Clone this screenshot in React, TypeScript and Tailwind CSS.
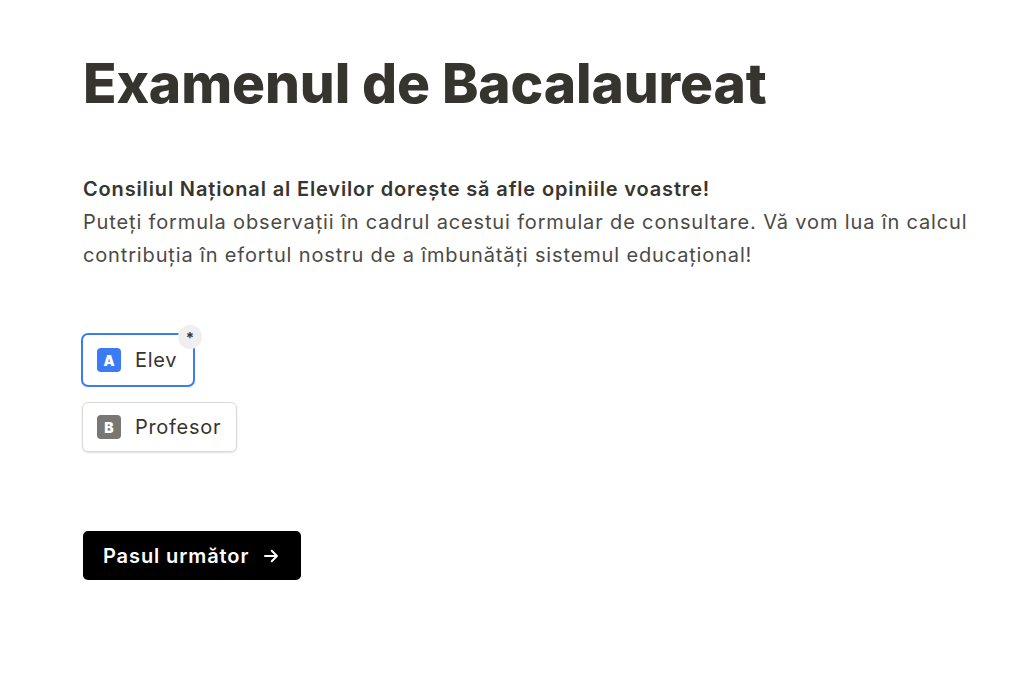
import React from "react";

const Choice = ({
  letter,
  label,
  selected,
}: {
  letter: string;
  label: string;
  selected?: boolean;
}) => {
  if (selected) {
    return (
      <div className="relative -ml-[2px] -mt-[1px] flex h-[54px] w-[114px] items-center gap-[14px] rounded-[7px] border-2 border-[#3b7cf6] pl-[14px]">
        <span className="flex h-6 w-6 items-center justify-center rounded-[4px] bg-[#3b7cf6] text-[14px] font-black text-white">
          {letter}
        </span>
        <span className="text-[20px] tracking-[0.7px] text-[#37352f]">{label}</span>
        <span className="absolute -right-[9px] -top-[10px] flex h-6 w-6 items-center justify-center rounded-full bg-[#efefef] text-[15px] font-bold leading-none text-[#37352f]">
          *
        </span>
      </div>
    );
  }
  return (
    <div className="-ml-[1px] flex h-[50px] w-[155px] items-center gap-[14px] rounded-[6px] border border-[#d9d9d6] pl-[14px] shadow-[0_1px_2px_rgba(0,0,0,0.12)]">
      <span className="flex h-6 w-6 items-center justify-center rounded-[4px] bg-[#787774] text-[14px] font-black text-white">
        {letter}
      </span>
      <span className="text-[20px] tracking-[0.7px] text-[#37352f]">{label}</span>
    </div>
  );
};

const App = () => {
  return (
    <div className="min-h-[673px] bg-white pl-[83px] pt-[50px] font-['Inter',sans-serif] text-[#37352f]">
      <h1 className="text-[55px] font-extrabold leading-[1.2] tracking-[-0.1px] text-[#35342f]">
        Examenul de Bacalaureat
      </h1>

      <div className="mt-[57px] text-[20px] leading-[33px] tracking-[0.85px]">
        <p className="font-semibold">
          Consiliul Național al Elevilor dorește să afle opiniile voastre!
        </p>
        <p className="text-[#4b4a46]">
          Puteți formula observații în cadrul acestui formular de consultare. Vă
          vom lua în calcul contribuția în efortul nostru de a îmbunătăți
          sistemul educațional!
        </p>
      </div>

      <div className="mt-[62px] flex flex-col items-start gap-[15px]">
        <Choice letter="A" label="Elev" selected />
        <Choice letter="B" label="Profesor" />
      </div>

      <button className="mt-[79px] flex h-[49px] w-[218px] items-center gap-[13px] rounded-[5px] bg-black pl-[20px] text-[20px] font-semibold tracking-[0.9px] text-white">
        Pasul următor
        <svg
          width="18"
          height="18"
          viewBox="0 0 24 24"
          fill="none"
          stroke="currentColor"
          strokeWidth="2.6"
          strokeLinecap="round"
          strokeLinejoin="round"
        >
          <path d="M4 12h16M13 5l7 7-7 7" />
        </svg>
      </button>
    </div>
  );
};

export default App;
